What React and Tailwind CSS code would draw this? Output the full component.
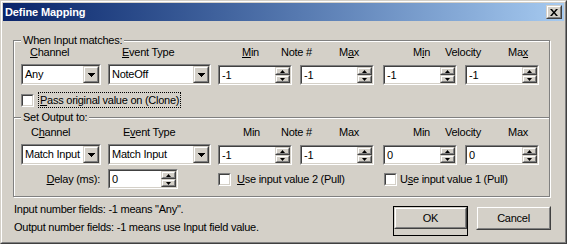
import React from "react";

const Sunken = ({ className = "", children }) => (
  <div className={`border border-t-[#808080] border-l-[#808080] border-b-white border-r-white shrink-0 ${className}`}>
    <div className="h-full border border-t-[#404040] border-l-[#404040] border-b-[#d4d0c8] border-r-[#d4d0c8] bg-white flex items-stretch">
      {children}
    </div>
  </div>
);

const Raised = ({ className = "", children }) => (
  <div className={`border border-t-[#d4d0c8] border-l-[#d4d0c8] border-b-[#404040] border-r-[#404040] bg-[#d4d0c8] ${className}`}>
    <div className="h-full border border-t-white border-l-white border-b-[#808080] border-r-[#808080] flex items-center justify-center">
      {children}
    </div>
  </div>
);

const DownTri = () => (
  <svg width="7" height="4" viewBox="0 0 7 4" className="block">
    <path d="M0 0H7L3.5 4Z" fill="#000" shapeRendering="crispEdges" />
  </svg>
);
const SmallUp = () => (
  <svg width="5" height="3" viewBox="0 0 5 3" className="block">
    <path d="M2.5 0L5 3H0Z" fill="#000" />
  </svg>
);
const SmallDown = () => (
  <svg width="5" height="3" viewBox="0 0 5 3" className="block">
    <path d="M0 0H5L2.5 3Z" fill="#000" />
  </svg>
);

const Combo = ({ w, value }) => (
  <Sunken className={`${w} h-[21px]`}>
    <span className="flex-1 pl-[2px] flex items-center whitespace-nowrap overflow-hidden">{value}</span>
    <Raised className="w-[16px] h-full shrink-0">
      <DownTri />
    </Raised>
  </Sunken>
);

const Spin = ({ w = "w-[74px]", value, className = "" }) => (
  <Sunken className={`${w} h-[20px] ${className}`}>
    <span className="flex-1 pl-[2px] flex items-center">{value}</span>
    <div className="w-[15px] flex flex-col">
      <Raised className="h-[8px]">
        <SmallUp />
      </Raised>
      <Raised className="h-[8px]">
        <SmallDown />
      </Raised>
    </div>
  </Sunken>
);

const Check = () => <Sunken className="w-[13px] h-[13px]" />;

const Group = ({ label, className = "", children }) => (
  <div className={`relative border border-[#808080] shadow-[1px_1px_0_white,inset_1px_1px_0_white] ${className}`}>
    <span className="absolute left-[7px] top-[-7px] bg-[#d4d0c8] px-[2px] leading-[13px] whitespace-nowrap">{label}</span>
    {children}
  </div>
);

const LabelRow = ({ items, className = "" }) => (
  <div className={`flex h-[13px] leading-[13px] whitespace-nowrap ${className}`}>
    {items.map((it, i) => (
      <div key={i} className={`${it.w} shrink-0`}>{it.t}</div>
    ))}
  </div>
);

export default function App() {
  const row1 = [
    { w: "w-[16px]", t: null },
    { w: "w-[92px]", t: <><u>C</u>hannel</> },
    { w: "w-[120px]", t: <><u>E</u>vent Type</> },
    { w: "w-[39px]", t: <><u>M</u>in</> },
    { w: "w-[58px]", t: "Note #" },
    { w: "w-[74px]", t: <>M<u>a</u>x</> },
    { w: "w-[32px]", t: <>M<u>i</u>n</> },
    { w: "w-[63px]", t: "Velocity" },
    { w: "w-[40px]", t: <>Ma<u>x</u></> },
  ];
  const row2 = [
    { w: "w-[17px]", t: null },
    { w: "w-[92px]", t: <>C<u>h</u>annel</> },
    { w: "w-[120px]", t: <>E<u>v</u>ent Type</> },
    { w: "w-[38px]", t: "Min" },
    { w: "w-[58px]", t: "Note #" },
    { w: "w-[74px]", t: "Max" },
    { w: "w-[32px]", t: "Min" },
    { w: "w-[63px]", t: "Velocity" },
    { w: "w-[40px]", t: "Max" },
  ];

  return (
    <div className="w-[567px] h-[244px] bg-[#d4d0c8] text-black text-[11px] leading-[13px] tracking-[-0.25px] font-['Liberation_Sans',Arial,sans-serif] border border-t-[#d4d0c8] border-l-[#d4d0c8] border-b-[#404040] border-r-[#404040] overflow-hidden">
      <div className="h-full border border-t-white border-l-white border-b-[#808080] border-r-[#808080] p-[1px] flex flex-col">
        {/* Title bar */}
        <div className="h-[18px] shrink-0 flex items-center bg-gradient-to-r from-[#0a246a] to-[#a6caf0]">
          <span className="pl-[2px] text-white font-bold text-[11px] leading-[13px] tracking-[-0.1px]">Define Mapping</span>
          <Raised className="ml-auto mr-[2px] w-[16px] h-[14px]">
            <svg width="8" height="7" viewBox="0 0 8 7" className="block">
              <path d="M0 0H2L4 2.5L6 0H8L5 3.5L8 7H6L4 4.5L2 7H0L3 3.5Z" fill="#000" />
            </svg>
          </Raised>
        </div>

        {/* Group 1 */}
        <Group label="When Input matches:" className="ml-[10px] mt-[19px] w-[537px] h-[77px] border-b-0 shrink-0">
          <LabelRow items={row1} className="mt-[5px]" />
          <div className="flex items-start mt-[5px] pl-[7px]">
            <Combo w="w-[80px]" value="Any" />
            <div className="ml-[7px]"><Combo w="w-[103px]" value="NoteOff" /></div>
            <Spin value="-1" className="ml-[7px] mt-[1px]" />
            <Spin value="-1" className="ml-[8px] mt-[1px]" />
            <Spin value="-1" className="ml-[9px] mt-[1px]" />
            <Spin value="-1" className="ml-[8px] mt-[1px]" />
          </div>
          <div className="flex items-center mt-[7px] pl-[7px] h-[16px]">
            <Check />
            <span className="ml-[4px] h-[16px] flex items-center border border-dotted border-black px-[1px] whitespace-nowrap">
              <u>P</u>ass original value on (Clone)
            </span>
          </div>
        </Group>

        {/* Group 2 */}
        <Group label="Set Output to:" className="ml-[10px] w-[537px] h-[80px] shrink-0">
          <LabelRow items={row2} className="mt-[8px]" />
          <div className="flex items-start mt-[5px] pl-[7px]">
            <Combo w="w-[80px]" value="Match Input" />
            <div className="ml-[7px]"><Combo w="w-[103px]" value="Match Input" /></div>
            <Spin value="-1" className="ml-[7px] mt-[1px]" />
            <Spin value="-1" className="ml-[8px] mt-[1px]" />
            <Spin value="0" className="ml-[9px] mt-[1px]" />
            <Spin value="0" className="ml-[8px] mt-[1px]" />
          </div>
          <div className="flex items-center mt-[4px] h-[20px]">
            <div className="w-[94px] shrink-0 text-right pr-[8px] whitespace-nowrap">
              <u>D</u>elay (ms):
            </div>
            <Spin w="w-[70px]" value="0" />
            <div className="ml-[40px] w-[166px] shrink-0 flex items-center">
              <Check />
              <span className="ml-[6px] whitespace-nowrap"><u>U</u>se input value 2 (Pull)</span>
            </div>
            <div className="flex items-center">
              <Check />
              <span className="ml-[3px] whitespace-nowrap">U<u>s</u>e input value 1 (Pull)</span>
            </div>
          </div>
        </Group>

        {/* Bottom */}
        <div className="flex mt-[3px]">
          <div className="ml-[11px] leading-[18px] whitespace-nowrap">
            <div>Input number fields: -1 means "Any".</div>
            <div>Output number fields: -1 means use Input field value.</div>
          </div>
          <div className="ml-auto mr-[13px] mt-[6px] flex gap-[8px]">
            <div className="border border-black">
              <Raised className="w-[73px] h-[22px]">OK</Raised>
            </div>
            <Raised className="w-[75px] h-[24px]">Cancel</Raised>
          </div>
        </div>
      </div>
    </div>
  );
}
